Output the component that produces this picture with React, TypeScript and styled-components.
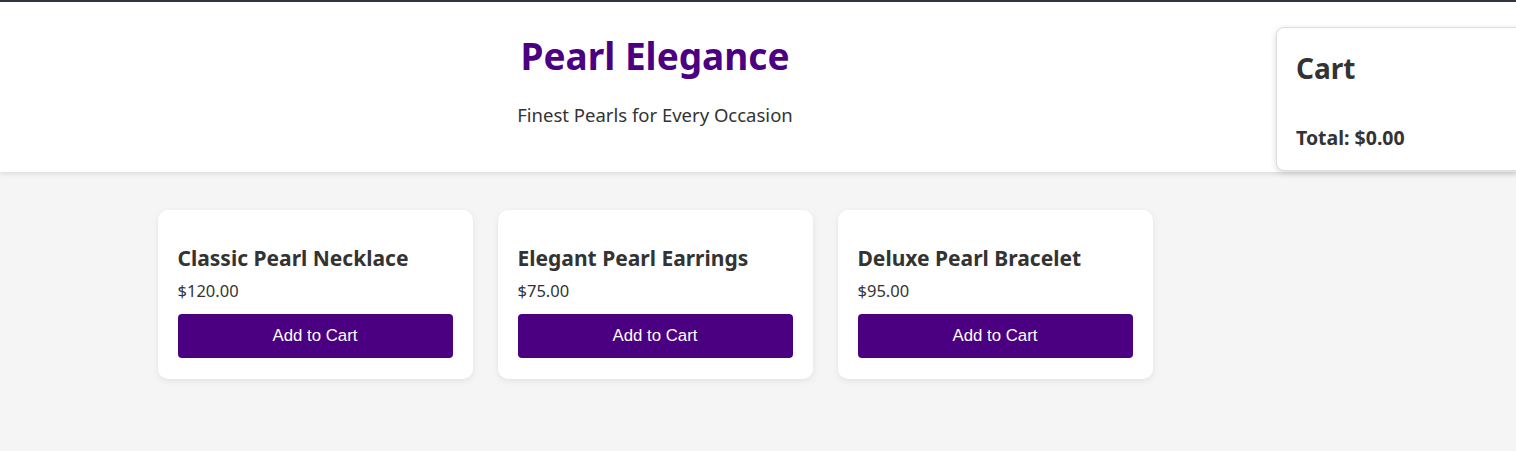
import React from "react";
import styled, { createGlobalStyle } from "styled-components";

const Global = createGlobalStyle`
  html, body { margin: 0; padding: 0; }
  body {
    background: #f5f5f5;
    font-family: "Noto Sans", "Open Sans", sans-serif;
    color: #333;
    border-top: 2px solid #2f3542;
    min-height: 449px;
    overflow-x: hidden;
  }
`;

const Page = styled.div`
  position: relative;
  width: 1516px;
`;

const Header = styled.header`
  background: #fff;
  height: 170px;
  box-shadow: 0 2px 5px rgba(0, 0, 0, 0.1);
  display: flex;
  flex-direction: column;
  align-items: center;
  width: 1310px;
  padding-right: 206px;
  box-sizing: content-box;
`;

const Title = styled.h1`
  margin: 29px 0 0;
  font-size: 37px;
  line-height: 50px;
  font-weight: 700;
  color: #4b0082;
`;

const Subtitle = styled.p`
  margin: 22px 0 0;
  font-size: 18.5px;
  line-height: 24px;
  color: #333;
`;

const Main = styled.main`
  width: 1310px;
  display: grid;
  grid-template-columns: repeat(3, 315px);
  gap: 25px;
  justify-content: center;
  padding-top: 38px;
`;

const Card = styled.div`
  background: #fff;
  border-radius: 10px;
  box-shadow: 0 2px 6px rgba(0, 0, 0, 0.08);
  padding: 30px 20px 20px;
  height: 169px;
  box-sizing: border-box;
  display: flex;
  flex-direction: column;
`;

const CardTitle = styled.h3`
  margin: 0;
  font-size: 21px;
  line-height: 28px;
  font-weight: 700;
  color: #333;
  padding-top: 4px;
`;

const Price = styled.p`
  margin: 8px 0 0;
  font-size: 16.5px;
  line-height: 22px;
  color: #333;
`;

const AddButton = styled.button`
  margin-top: 12px;
  height: 44px;
  width: 100%;
  border: none;
  border-radius: 4px;
  background: #4b0082;
  color: #fff;
  font-family: "Liberation Sans", Arial, sans-serif;
  font-size: 16.8px;
  cursor: pointer;
`;

const Cart = styled.aside`
  position: absolute;
  top: 25px;
  left: 1276px;
  width: 300px;
  height: 144px;
  box-sizing: border-box;
  background: #fff;
  border: 1px solid #ddd;
  border-radius: 8px;
  box-shadow: 0 2px 6px rgba(0, 0, 0, 0.15);
  padding: 20px 19px;
`;

const CartTitle = styled.h2`
  margin: 2px 0 0;
  font-size: 28px;
  line-height: 36px;
  font-weight: 700;
  color: #333;
`;

const Total = styled.p`
  margin: 40px 0 0;
  font-size: 19.5px;
  line-height: 24px;
  font-weight: 700;
  color: #333;
`;

const products = [
  { name: "Classic Pearl Necklace", price: 120 },
  { name: "Elegant Pearl Earrings", price: 75 },
  { name: "Deluxe Pearl Bracelet", price: 95 },
];

export default function App() {
  return (
    <>
      <Global />
      <Page>
        <Header>
          <Title>Pearl Elegance</Title>
          <Subtitle>Finest Pearls for Every Occasion</Subtitle>
        </Header>
        <Main>
          {products.map((p) => (
            <Card key={p.name}>
              <CardTitle>{p.name}</CardTitle>
              <Price>${p.price.toFixed(2)}</Price>
              <AddButton>Add to Cart</AddButton>
            </Card>
          ))}
        </Main>
        <Cart>
          <CartTitle>Cart</CartTitle>
          <Total>Total: $0.00</Total>
        </Cart>
      </Page>
    </>
  );
}
